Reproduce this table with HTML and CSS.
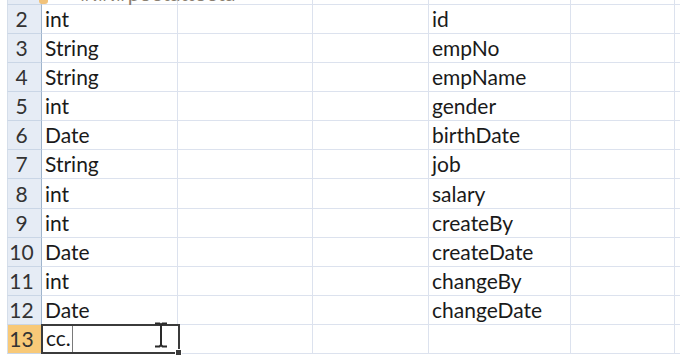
FILE: index.html
```html
<!DOCTYPE html>
<html>
<head>
<meta charset="utf-8">
<link rel="stylesheet" href="styles.css">
</head>
<body>
<div class="sheet">
  <div class="grid">
    <div class="hd top"></div>
    <div class="c top first"><span class="tag"></span><span class="cut">#!#!#poetattoeta</span></div>
    <div class="c top"></div><div class="c top"></div><div class="c top"></div><div class="c top"></div><div class="c top edge"></div>

    <div class="hd">2</div><div class="c">int</div><div class="c"></div><div class="c"></div><div class="c">id</div><div class="c"></div><div class="c edge"></div>
    <div class="hd">3</div><div class="c">String</div><div class="c"></div><div class="c"></div><div class="c">empNo</div><div class="c"></div><div class="c edge"></div>
    <div class="hd">4</div><div class="c">String</div><div class="c"></div><div class="c"></div><div class="c">empName</div><div class="c"></div><div class="c edge"></div>
    <div class="hd">5</div><div class="c">int</div><div class="c"></div><div class="c"></div><div class="c">gender</div><div class="c"></div><div class="c edge"></div>
    <div class="hd">6</div><div class="c">Date</div><div class="c"></div><div class="c"></div><div class="c">birthDate</div><div class="c"></div><div class="c edge"></div>
    <div class="hd">7</div><div class="c">String</div><div class="c"></div><div class="c"></div><div class="c">job</div><div class="c"></div><div class="c edge"></div>
    <div class="hd">8</div><div class="c">int</div><div class="c"></div><div class="c"></div><div class="c">salary</div><div class="c"></div><div class="c edge"></div>
    <div class="hd">9</div><div class="c">int</div><div class="c"></div><div class="c"></div><div class="c">createBy</div><div class="c"></div><div class="c edge"></div>
    <div class="hd">10</div><div class="c">Date</div><div class="c"></div><div class="c"></div><div class="c">createDate</div><div class="c"></div><div class="c edge"></div>
    <div class="hd">11</div><div class="c">int</div><div class="c"></div><div class="c"></div><div class="c">changeBy</div><div class="c"></div><div class="c edge"></div>
    <div class="hd">12</div><div class="c">Date</div><div class="c"></div><div class="c"></div><div class="c">changeDate</div><div class="c"></div><div class="c edge"></div>
    <div class="hd sel">13</div>
    <div class="c active"><span class="val">cc.</span><span class="caret"></span>
      <svg class="ibeam" width="14" height="26" viewBox="0 0 14 26"><path d="M1 1.5h4.5l1.5 1.5 1.5-1.5H13M7 3v20M1 24.5h4.5L7 23l1.5 1.5H13" fill="none" stroke="#2a2a2a" stroke-width="2"/></svg>
      <span class="handle"></span>
    </div>
    <div class="c"></div><div class="c"></div><div class="c"></div><div class="c"></div><div class="c edge"></div>
  </div>
</div>
</body>
</html>
```
FILE: styles.css
```css
html, body { margin: 0; padding: 0; background: #fff; }
body { width: 694px; height: 359px; overflow: hidden; font-family: Lato, "Open Sans", sans-serif; }
.sheet { padding-left: 7px; height: 359px; overflow: hidden; }
.grid {
  display: grid;
  grid-template-columns: 35px 136px 135px 116px 142px 104px 5px;
  grid-template-rows: 5px repeat(12, 29.08px);
  width: 673px;
}
.hd {
  background: #e6ecf5;
  border-right: 1px solid #9fb4cc;
  border-bottom: 1px solid #cad6e6;
  border-left: 1px solid #d5deea;
  box-sizing: border-box;
  color: #333;
  font-size: 21px;
  display: flex;
  align-items: flex-end;
  justify-content: center;
  padding-right: 6px;
  padding-bottom: 2px;
  line-height: 24px;
}
.hd.sel { background: #f8c978; border-right-color: #c8a060; }
.c {
  border-right: 1px solid #dce2ee;
  border-bottom: 1px solid #dce2ee;
  box-sizing: border-box;
  font-size: 21px;
  color: #1a1a1a;
  display: flex;
  align-items: flex-end;
  padding-left: 3px;
  padding-bottom: 2px;
  line-height: 24px;
  white-space: nowrap;
  overflow: hidden;
}
.c.edge { border-right: none; }
.c.top, .hd.top { padding: 0; align-items: flex-end; overflow: hidden; }
.c.first { position: relative; overflow: visible; }
.tag { position: absolute; left: -3px; top: 0; width: 9px; height: 4px; background: #f1c27a; border-radius: 0 0 3px 3px; }
.cut { color: #8a7f72; font-size: 21px; line-height: 24px; margin-left: 38px; margin-bottom: -1px; height: 24px; margin-top: -20px; }
.active {
  position: relative;
  overflow: visible;
  border: 2px solid #3b3b3b;
  margin-left: -1px;
  margin-right: -2px;
  margin-top: -1px;
}
.val { color: #1a1a1a; }
.caret { width: 1px; align-self: stretch; background: #7a7a7a; margin-left: 1px; margin-bottom: -2px; }
.ibeam { position: absolute; left: 111px; top: -4px; }
.handle { position: absolute; right: -4px; bottom: -4px; width: 5px; height: 5px; background: #3b3b3b; border: 1px solid #fff; }
```
